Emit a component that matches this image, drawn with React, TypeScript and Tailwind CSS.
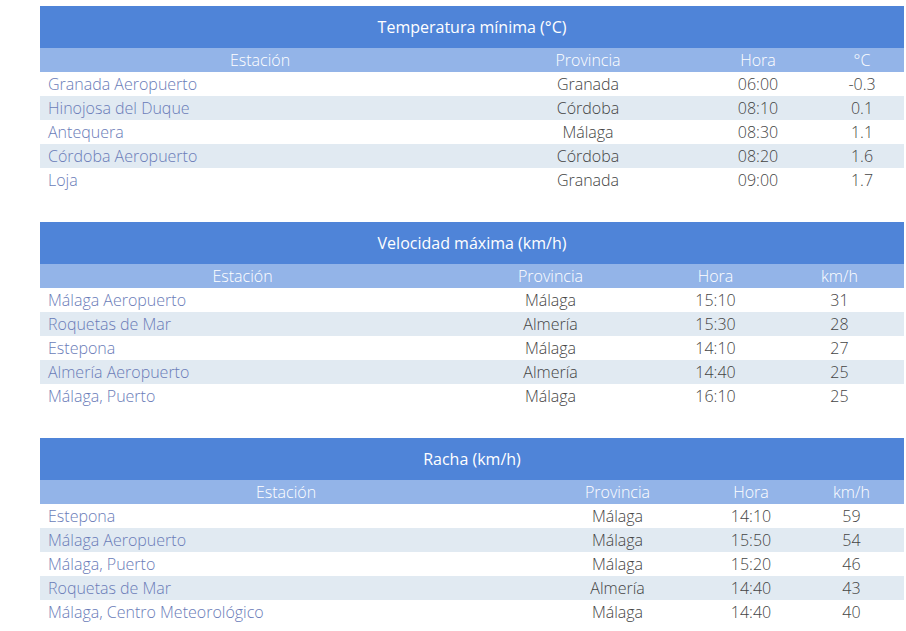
type Row = [string, string, string, string];

type TableData = {
  title: string;
  unit: string;
  cols: string;
  rows: Row[];
};

const tables: TableData[] = [
  {
    title: 'Temperatura mínima (°C)',
    unit: '°C',
    cols: 'grid-cols-[440px_216px_124px_84px]',
    rows: [
      ['Granada Aeropuerto', 'Granada', '06:00', '-0.3'],
      ['Hinojosa del Duque', 'Córdoba', '08:10', '0.1'],
      ['Antequera', 'Málaga', '08:30', '1.1'],
      ['Córdoba Aeropuerto', 'Córdoba', '08:20', '1.6'],
      ['Loja', 'Granada', '09:00', '1.7'],
    ],
  },
  {
    title: 'Velocidad máxima (km/h)',
    unit: 'km/h',
    cols: 'grid-cols-[405px_211px_119px_129px]',
    rows: [
      ['Málaga Aeropuerto', 'Málaga', '15:10', '31'],
      ['Roquetas de Mar', 'Almería', '15:30', '28'],
      ['Estepona', 'Málaga', '14:10', '27'],
      ['Almería Aeropuerto', 'Almería', '14:40', '25'],
      ['Málaga, Puerto', 'Málaga', '16:10', '25'],
    ],
  },
  {
    title: 'Racha (km/h)',
    unit: 'km/h',
    cols: 'grid-cols-[492px_171px_96px_105px]',
    rows: [
      ['Estepona', 'Málaga', '14:10', '59'],
      ['Málaga Aeropuerto', 'Málaga', '15:50', '54'],
      ['Málaga, Puerto', 'Málaga', '15:20', '46'],
      ['Roquetas de Mar', 'Almería', '14:40', '43'],
      ['Málaga, Centro Meteorológico', 'Málaga', '14:40', '40'],
    ],
  },
];

function DataTable({ table }: { table: TableData }) {
  return (
    <div className="w-[864px]">
      {/* Title bar */}
      <div className="h-[42px] bg-[#4f84d8] flex items-center justify-center text-white text-base">
        {table.title}
      </div>

      {/* Column headers */}
      <div className={`grid ${table.cols} bg-[#93b4e8] text-white font-light text-base leading-6 text-center`}>
        <div>Estación</div>
        <div>Provincia</div>
        <div>Hora</div>
        <div>{table.unit}</div>
      </div>

      {/* Body */}
      {table.rows.map((row, i) => (
        <div
          key={i}
          className={`grid ${table.cols} font-light text-base leading-6 ${i % 2 === 1 ? 'bg-[#e1eaf2]' : 'bg-white'}`}
        >
          <div className="pl-2 text-[#6a7cb8]">{row[0]}</div>
          <div className="text-center text-[#444]">{row[1]}</div>
          <div className="text-center text-[#444]">{row[2]}</div>
          <div className="text-center text-[#444]">{row[3]}</div>
        </div>
      ))}
    </div>
  );
}

export default function App() {
  return (
    <div className="min-h-screen bg-white pt-[6px] pl-10 flex flex-col gap-[30px] font-['Open_Sans',sans-serif]">
      {tables.map((t) => (
        <DataTable key={t.title} table={t} />
      ))}
    </div>
  );
}
